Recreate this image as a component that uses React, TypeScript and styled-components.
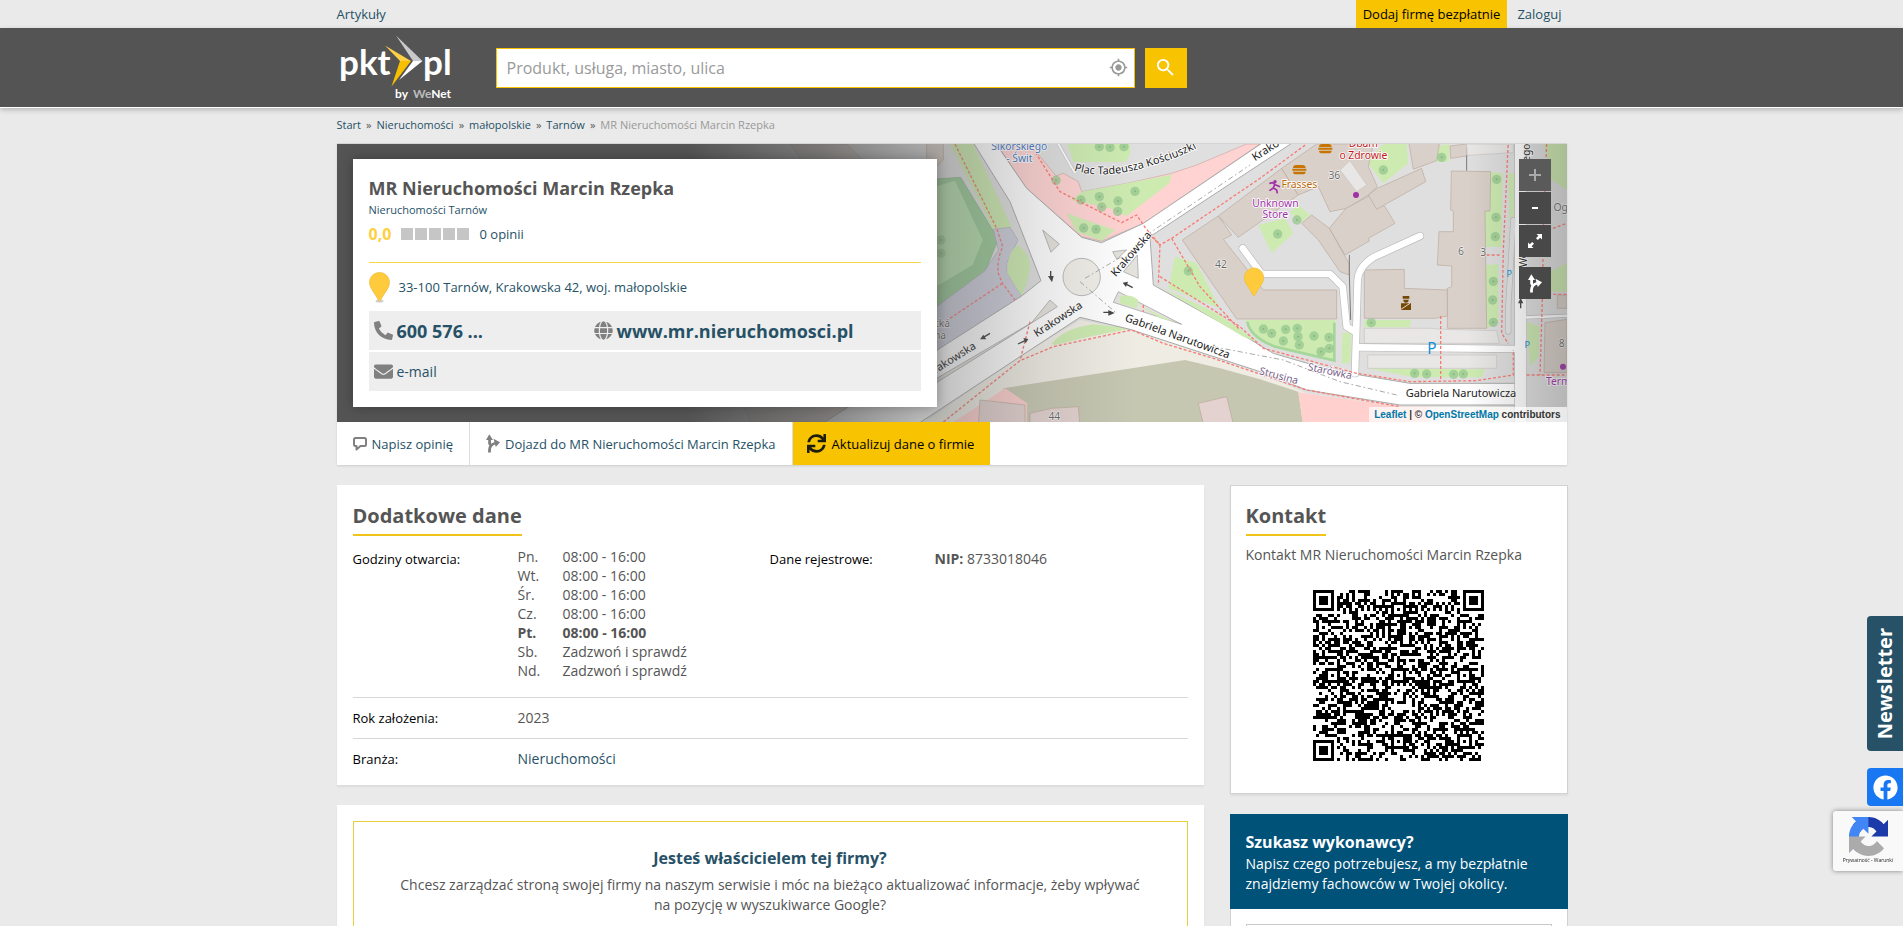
import React from 'react';
import styled, { createGlobalStyle, css } from 'styled-components';
import { FaPhoneAlt, FaGlobe, FaEnvelope, FaSync, FaFacebook } from 'react-icons/fa';
import { MdSearch, MdMyLocation } from 'react-icons/md';

const color = {
  page: '#eaeaea',
  dark: '#545454',
  text: '#555555',
  link: '#265166',
  yellow: '#f8c300',
  line: '#d8d8d8',
  blue: '#005279',
};

const GlobalStyle = createGlobalStyle`
  *, *::before, *::after { box-sizing: border-box; }
  body {
    margin: 0;
    background: ${color.page};
    color: ${color.text};
    font: 14px/20px "Open Sans", "Noto Sans", sans-serif;
  }
  h1, h2, h3, p { margin: 0; padding: 0; }
  a { color: ${color.link}; text-decoration: none; }
  button, input { font: inherit; }
`;

const Page = styled.div`
  height: 100vh;
  overflow: hidden;
`;

const Container = styled.div`
  width: 100%;
  max-width: 1232px;
  margin: 0 auto;
  padding-left: 1px;
`;

const HeroContainer = styled(Container)`
  padding-right: 1px;
`;

const TopBar = styled(Container)`
  display: flex;
  justify-content: space-between;
  height: 28px;
  font-size: 13px;
  line-height: 28px;
`;

const TopLinks = styled.nav`
  display: flex;
  gap: 10px;
  padding-right: 6px;
`;

const AddCompany = styled.a`
  padding: 0 7px;
  background: ${color.yellow};
  color: #000;
`;

const Header = styled.header`
  background: ${color.dark};
  border-bottom: 1px solid #fff;
  box-shadow: 0 2px 5px rgba(0, 0, 0, 0.22);
`;

const HeaderInner = styled(Container)`
  display: flex;
  align-items: center;
  height: 79px;
`;

const LogoLink = styled.a`
  flex: none;
  width: 159px;
  height: 79px;
`;

const SearchForm = styled.form`
  display: flex;
  gap: 10px;
  width: 691px;
`;

const SearchField = styled.label`
  display: flex;
  flex: 1;
  align-items: center;
  height: 40px;
  padding: 0 6px 0 10px;
  background: #fff;
  border: 1px solid ${color.yellow};
  color: #999;
`;

const SearchInput = styled.input`
  flex: 1;
  min-width: 0;
  border: 0;
  outline: 0;
  padding: 0;
  background: none;
  color: ${color.text};
  font-size: 16px;
  &::placeholder { color: #9a9a9a; opacity: 1; }
`;

const SearchButton = styled.button`
  display: grid;
  place-items: center;
  width: 42px;
  height: 40px;
  padding: 0;
  border: 0;
  background: ${color.yellow};
  color: #fff;
`;

const Breadcrumbs = styled(Container).attrs({ as: 'nav' })`
  display: flex;
  gap: 5px;
  padding-top: 8px;
  padding-bottom: 9px;
  font-size: 11px;
  line-height: 18px;
  color: ${color.text};
`;

const Crumb = styled.span<{ $current?: boolean }>`
  display: flex;
  gap: 5px;
  color: ${(p) => (p.$current ? '#999' : 'inherit')};
`;

const Hero = styled.section`
  border-top: 1px solid #d4d4d4;
  background: #fff;
  box-shadow: 0 1px 2px rgba(0, 0, 0, 0.12);
`;

const MapArea = styled.div`
  position: relative;
  display: flex;
  justify-content: space-between;
  align-items: flex-start;
  height: 278px;
  padding: 15px 16px;
  overflow: hidden;
  background: ${color.dark};
`;

const MapSvg = styled.svg`
  position: absolute;
  inset: 0;
  width: 100%;
  height: 100%;
`;

const InfoCard = styled.div`
  position: relative;
  width: 584px;
  height: 248px;
  padding: 16px;
  background: #fff;
  box-shadow: 0 0 12px rgba(0, 0, 0, 0.3);
`;

const CompanyName = styled.h1`
  font-size: 18px;
  line-height: 26px;
  color: ${color.text};
`;

const Category = styled.a`
  display: block;
  font-size: 11px;
  line-height: 18px;
`;

const Rating = styled.div`
  display: flex;
  align-items: center;
  height: 30px;
  margin-bottom: 13px;
  font-size: 13px;
`;

const Score = styled.b`
  width: 32px;
  font-size: 16px;
  color: #ffcf3f;
`;

const Squares = styled.div`
  display: flex;
  gap: 2px;
  margin-right: 11px;
`;

const Square = styled.span`
  width: 12px;
  height: 12px;
  background: #c6c6c6;
`;

const Address = styled.p`
  display: flex;
  align-items: center;
  gap: 9px;
  height: 49px;
  border-top: 1px solid #f5d54a;
  font-size: 13px;
  color: ${color.link};
`;

const ContactRow = styled.div`
  display: grid;
  grid-template-columns: 220px 1fr;
  align-items: center;
  height: 39px;
  margin-bottom: 2px;
  padding: 0 5px;
  background: #eee;
`;

const ContactLink = styled.a<{ $strong?: boolean }>`
  display: flex;
  align-items: center;
  gap: 4px;
  svg { color: #808080; flex: none; }
  ${(p) => p.$strong && css`
    font-size: 18px;
    font-weight: 700;
  `}
`;

const MapControls = styled.div`
  position: relative;
  display: flex;
  flex-direction: column;
  gap: 1px;
`;

const MapButton = styled.button<{ $apart?: boolean; $muted?: boolean }>`
  display: grid;
  place-items: center;
  width: 32px;
  height: 32px;
  margin-top: ${(p) => (p.$apart ? 9 : 0)}px;
  padding: 0;
  border: 0;
  background: ${(p) => (p.$muted ? '#5a5a5a' : '#484848')};
  color: ${(p) => (p.$muted ? '#aaa' : '#fff')};
`;

const Attribution = styled.div`
  position: absolute;
  right: 0;
  bottom: 0;
  padding: 0 6px 0 5px;
  background: rgba(255, 255, 255, 0.7);
  color: #333;
  font: bold 10px/15px "Liberation Sans", sans-serif;
  a { color: #0078a8; }
`;

const Tabs = styled.nav`
  display: flex;
  height: 43px;
  font-size: 13px;
`;

const Tab = styled.a<{ $active?: boolean }>`
  display: flex;
  align-items: center;
  gap: 5px;
  padding: 0 16px;
  border-right: 1px solid #ddd;
  svg { color: #808080; flex: none; }
  ${(p) => p.$active && css`
    gap: 6px;
    padding: 0 16px 0 14px;
    border: 0;
    background: ${color.yellow};
    color: #000;
    svg { color: #1c1c10; }
  `}
`;

const Columns = styled(Container)`
  display: grid;
  grid-template-columns: minmax(0, 1fr) 338px;
  gap: 26px;
  align-items: start;
  padding-top: 20px;
`;

const Column = styled.div`
  display: flex;
  flex-direction: column;
  gap: 20px;
`;

const Card = styled.section<{ $outlined?: boolean }>`
  padding: ${(p) => (p.$outlined ? '15px' : '16px 16px 6px')};
  background: #fff;
  border: ${(p) => (p.$outlined ? '1px solid #d2d2d2' : '0')};
  box-shadow: 0 2px 2px rgba(0, 0, 0, 0.06);
`;

const Heading = styled.h2`
  display: inline-block;
  padding-bottom: 4px;
  border-bottom: 2px solid #f0c419;
  font-size: 20px;
  line-height: 29px;
  color: ${color.text};
`;

const DataRow = styled.div<{ $first?: boolean }>`
  display: grid;
  grid-template-columns: 165px 252px 165px 1fr;
  padding: ${(p) => (p.$first ? '13px 0 17px' : '10px 0')};
  border-top: ${(p) => (p.$first ? '0' : `1px solid ${color.line}`)};
`;

const DataLabel = styled.div`
  font-size: 13px;
  color: #000;
`;

const Hours = styled.table`
  margin-top: -2px;
  border-collapse: collapse;
  line-height: 19px;
  td, th { padding: 0; text-align: left; font-weight: inherit; }
  th { width: 45px; }
`;

const HoursRow = styled.tr<{ $today?: boolean }>`
  font-weight: ${(p) => (p.$today ? 700 : 400)};
`;

const OwnerBox = styled.div`
  padding: 24px 40px 60px;
  border: 1px solid #e6cf3c;
  text-align: center;
`;

const OwnerTitle = styled.h3`
  margin-bottom: 5px;
  font-size: 16px;
  line-height: 24px;
  color: ${color.link};
`;

const ContactText = styled.p`
  margin: 9px 0 25px;
`;

const QrSvg = styled.svg`
  display: block;
  width: 171px;
  height: 171px;
  margin: 0 auto 17px;
`;

const Inquiry = styled.section`
  background: #fff;
  border: 1px solid #d2d2d2;
  border-top: 0;
`;

const InquiryHead = styled.div`
  margin: 0 -1px;
  padding: 17px 16px 15px;
  background: ${color.blue};
  color: #fff;
  h2 { font-size: 16px; line-height: 23px; }
`;

const InquiryInput = styled.input`
  display: block;
  width: calc(100% - 30px);
  height: 40px;
  margin: 15px;
  border: 1px solid #c8c8c8;
`;

const SideTab = styled.a<{ $top: number; $h: number; $bg: string }>`
  position: fixed;
  right: 0;
  top: ${(p) => p.$top}px;
  display: grid;
  place-items: center;
  width: 36px;
  height: ${(p) => p.$h}px;
  border-radius: 4px 0 0 4px;
  background: ${(p) => p.$bg};
  color: #fff;
`;

const VerticalText = styled.span`
  writing-mode: vertical-rl;
  transform: rotate(180deg);
  font-size: 20px;
  line-height: 28px;
  font-weight: 700;
`;

const Captcha = styled.div`
  position: fixed;
  right: 0;
  top: 811px;
  display: flex;
  flex-direction: column;
  align-items: center;
  width: 70px;
  height: 60px;
  padding-top: 6px;
  border-radius: 3px 0 0 3px;
  background: #f9f9f9;
  box-shadow: 0 0 5px #808080;
  color: #222;
  font: 5px/8px "Open Sans", sans-serif;
`;

const Logo = () => (
  <svg width="120" height="79" viewBox="0 28 120 79" role="img" aria-label="pkt.pl by WeNet">
    <g fill="#fff" fontFamily="Lato, sans-serif" fontWeight="700">
      <text x="2" y="75" fontSize="35">pkt</text>
      <text x="86" y="75" fontSize="35">pl</text>
      <text x="58" y="98" fontSize="12">by</text>
      <text x="76" y="98" fontSize="12"><tspan fill="#bdbdbd">We</tspan>Net</text>
    </g>
    <path fill="#c9c9cb" d="M59 35.500 85.500 61H76Z" />
    <path fill="#fff" d="M85.500 61 62 80 76 61Z" />
    <path fill="#ffd044" d="M48 45.500 74 61H63Z" />
    <path fill="#f8bf00" d="M74 61 54.500 86.500 63 61Z" />
  </svg>
);

const PinIcon = () => (
  <svg width="21" height="31" viewBox="0 0 21 31" aria-hidden="true">
    <ellipse cx="10.500" cy="29" rx="4" ry="1.600" fill="#cfcfcf" />
    <path d="M10.500 .6C4.800 .6.600 5 .600 10.400c0 6.100 6.200 11.900 8.600 17.400.6 1.400 2 1.400 2.600 0 2.400-5.500 8.600-11.300 8.600-17.400C20.400 5 16.200.6 10.500.6Z" fill="#ffcb3d" stroke="#eebb35" strokeWidth=".8" />
  </svg>
);

const RouteIcon = () => (
  <svg width="14" height="19" viewBox="0 0 14 19" fill="none" stroke="currentColor" strokeWidth="2.800" aria-hidden="true">
    <path d="M3.500 18.500V16c0-4.500 3-6.200 6.500-7" />
    <path d="M5.500 12 3.600 9.500V4" />
    <path d="M0 6 3.300.3 7 6ZM7.500 4.800 14 8.200 9.800 13Z" fill="currentColor" stroke="none" />
  </svg>
);

const ExpandIcon = () => (
  <svg width="16" height="16" viewBox="0 0 16 16" aria-hidden="true">
    <path d="M1 15V9.500l1.800 1.800L5.200 9l1.800 1.800-2.400 2.400L6.500 15ZM15 1v5.500l-1.800-1.800L10.800 7 9 5.200l2.400-2.400L9.500 1Z" fill="currentColor" />
  </svg>
);

const CommentIcon = () => (
  <svg width="14" height="15" viewBox="0 0 14 15" fill="none" stroke="currentColor" strokeWidth="2" strokeLinejoin="round" aria-hidden="true">
    <path d="M2.500 2h9q1.500 0 1.500 1.500v5q0 1.500-1.500 1.500H7.500L3.500 13.500V10H2.500Q1 10 1 8.500v-5Q1 2 2.500 2Z" />
  </svg>
);

const CaptchaLogo = () => (
  <svg width="39" height="39" viewBox="0 0 64 64" role="img" aria-label="reCAPTCHA">
    <path fill="#1c3aa9" d="M64 31.955l-.033-1.370V4.687l-7.160 7.160C50.948 4.674 42.033.093 32.050.093c-10.400 0-19.622 4.960-25.458 12.640l11.736 11.860a15.550 15.550 0 0 1 4.754-5.334c2.050-1.600 4.952-2.906 8.968-2.906.485 0 .86.057 1.135.163 4.976.393 9.288 3.140 11.828 7.124l-8.307 8.307L64 31.953" />
    <path fill="#4285f4" d="M31.862.094l-1.370.033H4.594l7.160 7.160C4.580 13.147 0 22.060 0 32.046c0 10.400 4.960 19.622 12.640 25.458L24.500 45.768a15.550 15.550 0 0 1-5.334-4.754c-1.600-2.050-2.906-4.952-2.906-8.968 0-.485.057-.86.163-1.135.393-4.976 3.140-9.288 7.124-11.828l8.307 8.307L31.860.095" />
    <path fill="#ababab" d="M.001 32.045l.033 1.370v25.898l7.160-7.160c5.860 7.173 14.774 11.754 24.760 11.754 10.400 0 19.622-4.960 25.458-12.640l-11.736-11.860a15.550 15.550 0 0 1-4.754 5.334c-2.050 1.600-4.952 2.906-8.968 2.906-.485 0-.86-.057-1.135-.163-4.976-.393-9.288-3.140-11.828-7.124l8.307-8.307c-10.522.04-22.400.066-27.295-.005" />
  </svg>
);

const QR_SIZE = 57;

function ring(x: number, y: number, cx: number, cy: number) {
  return Math.max(Math.abs(x - cx), Math.abs(y - cy));
}

function buildQrPath() {
  const finders = [[3, 3], [QR_SIZE - 4, 3], [3, QR_SIZE - 4]];
  const aligners: number[][] = [];
  for (const cx of [6, 28, 50]) {
    for (const cy of [6, 28, 50]) {
      if (!finders.some(([fx, fy]) => ring(cx, cy, fx, fy) < 6)) aligners.push([cx, cy]);
    }
  }
  let seed = 90210;
  let d = '';
  for (let y = 0; y < QR_SIZE; y++) {
    for (let x = 0; x < QR_SIZE; x++) {
      seed = (Math.imul(seed, 1664525) + 1013904223) >>> 0;
      let on = (seed >>> 16) % 100 < 51;
      if (x === 6) on = y % 2 === 0;
      if (y === 6) on = x % 2 === 0;
      for (const [cx, cy] of aligners) {
        const r = ring(x, y, cx, cy);
        if (r <= 2) on = r !== 1;
      }
      for (const [cx, cy] of finders) {
        const r = ring(x, y, cx, cy);
        if (r <= 4) on = r !== 2 && r !== 4;
      }
      if (on) d += `M${x} ${y}h1v1h-1z`;
    }
  }
  return d;
}

const qrPath = buildQrPath();

const pathTrees = [
  [378, 121], [508, 170], [453, 180], [515, 201], [564, 183], [563, 214], [615, 154], [461, 264], [498, 268],
  [508, 20], [540, 22], [582, 20], [775, 393], [33, 300], [33, 340],
  [1360, 90], [1101, 240], [1043, 282], [1700, 118], [1698, 232], [1696, 290], [1690, 424], [1688, 480], [1690, 547],
  [1000, 567], [1025, 580], [1067, 568], [1102, 565], [1060, 603], [1104, 590], [1108, 615], [1152, 588],
  [1197, 592], [1173, 635], [1198, 625], [1324, 548], [1454, 700], [1490, 702], [1571, 703], [1600, 702], [1535, 52],
];

const label = { fontSize: 33, fill: '#222', stroke: '#fff', strokeWidth: 5, paintOrder: 'stroke' as const };
const small = { ...label, fontSize: 31 };

const CityMap = () => (
  <MapSvg viewBox="0 0 1230 278" preserveAspectRatio="xMaxYMin slice" role="img" aria-label="Mapa dojazdu">
    <defs>
      <linearGradient id="fade" gradientUnits="userSpaceOnUse" x1="350" y1="0" x2="800" y2="0">
        <stop offset="0" stopColor="#545454" />
        <stop offset=".3" stopColor="#585858" stopOpacity=".74" />
        <stop offset=".54" stopColor="#606060" stopOpacity=".42" />
        <stop offset=".78" stopColor="#686868" stopOpacity=".16" />
        <stop offset="1" stopColor="#707070" stopOpacity="0" />
      </linearGradient>
      <linearGradient id="edge" x1="0" y1="0" x2="1" y2="0">
        <stop offset="0" stopColor="#545454" stopOpacity="0" />
        <stop offset="1" stopColor="#545454" stopOpacity=".3" />
      </linearGradient>
      <path id="plac" d="M432 92Q520 118 640 84T830 8" />
    </defs>
    <g transform="translate(593 -4) scale(.33333)" fontFamily="Noto Sans, Open Sans, sans-serif">
      <rect x="-1800" y="0" width="3720" height="860" fill="#e0dfdf" />

      {/* sports ground and green belt west of the roundabout */}
      <g strokeWidth="2">
        <path d="M-420 12h170l110 110-60 60-120-30ZM-600 700l200-60 180 110-60 96h-260Z" fill="#d9d0c9" stroke="#b9a99c" />
        <path d="M60 12H130L245 262 190 268Z" fill="#cdebb0" />
        <path d="M-330 200 0 118 92 112 205 298 165 395 20 500-220 560Z" fill="#9bcb98" stroke="#86b685" />
        <path d="M-300 220 0 145 75 122 158 300 128 375 0 450-220 520Z" fill="#b6e0ad" />
        <path d="M190 268 240 262 264 300 230 370 232 400 275 468-150 745-190 600 20 500 165 392 205 330Z" fill="#cccdda" stroke="#acadba" />
        <path d="M262 315Q300 340 300 375T275 468L232 400Q230 340 262 315Z" fill="#cdebb0" />
      </g>

      {/* square and lawns north */}
      <path d="M200 12H300L378 108 400 100 445 125 455 155 590 130 725 100 800 75 950 12H990L640 250 515 303 455 290 290 145Z" fill="#ffd3d2" stroke="#c9a9a5" strokeWidth="2" />
      <path d="M455 155 725 104 718 130 590 228 540 205 425 180ZM410 220 555 270 515 302 440 275ZM412 12H600Q605 60 580 66H430Z" fill="#cdebb0" />
      <path d="M385 12 435 100" stroke="#bbb" strokeWidth="9" />
      <path d="M385 12 435 100" stroke="#fff" strokeWidth="6" />

      {/* land south */}
      <path d="M-500 860 0 835 270 650 450 540 610 572 990 700 1130 760 1410 800H1740V860Z" fill="#eeece3" />
      <path d="M220 745 765 660 870 685 990 718 1105 755 1120 860H240Z" fill="#c6c7b1" />
      <path d="M1105 757 1410 800H1500V860H1120ZM225 745 292 790 290 860H50Z" fill="#ffd0cd" />
      <path d="M150 780 285 795V860H145ZM300 820 365 805 445 800 450 860H300ZM805 790 890 770 912 860H822Z" fill="#e3d2cf" stroke="#b9a99c" strokeWidth="2" />
      <path d="M365 612Q400 565 490 553L605 565 470 592 375 615Z" fill="#cdebb0" />

      {/* streets of the roundabout */}
      <path d="M125 0 240 185 333 422 275 468-400 900-200 960 0 828 270 650 450 532 600 568 990 695 1130 750 1410 795H1760V730H1440L1200 690 1030 640 930 580 670 435 660 290 930 112 1100 0H1010L640 250 515 308 455 292 290 145 190 0Z" fill="#fff" stroke="#aaa" strokeWidth="3" />
      <path d="M338 270 388 312 363 337ZM550 487 565 455 755 553ZM20 715 305 548 360 480 382 500 240 590 0 740ZM622 345 580 395 625 415ZM548 335 590 330 560 358Z" fill="#e4e2dc" stroke="#999" strokeWidth="2" />
      <path d="M570 470Q600 460 625 480L620 505 570 490ZM635 500 730 545 690 535Z" fill="#cdebb0" />
      <circle cx="455" cy="411" r="56" fill="#f1efe9" stroke="#999" strokeWidth="2" />

      {/* lawns east */}
      <g fill="#cdebb0">
        <path d="M735 350 800 370 870 505 715 445ZM690 440 860 520 990 608 940 590ZM945 540H1215V665L1040 620 980 590ZM1303 540H1443L1440 562H1303ZM1313 685 1665 688 1655 712H1450Z" />
        <path d="M1682 95 1718 100 1715 320H1668L1665 215ZM1665 375 1705 372V545L1672 565ZM1790 545 1830 560 1825 650 1800 680ZM1237 580 1265 575 1260 670H1235Z" />
        <path d="M985 255 1065 235 1090 280 1025 340ZM1310 65 1360 12H1430L1435 70 1360 130ZM1840 0H1911V150L1865 120ZM1850 400 1911 370V455H1835ZM1080 215 1105 195 1140 225 1110 250ZM1515 20 1560 12 1555 65H1520ZM1735 100H1755L1750 235H1738Z" />
      </g>
      <path d="M952 545Q960 590 1035 620L1213 662V548" fill="none" stroke="#a5d69a" strokeWidth="8" />

      {/* buildings */}
      <g fill="#d9d0c9" stroke="#b9a99c" strokeWidth="2">
        <path d="M757 300 865 228 905 285 880 298 1000 450H1220V537H920Z" />
        <path d="M865 228 1055 85 1105 165 925 292Z" />
        <path d="M1055 85 1160 12H1330L1315 80 1342 140 1315 165 1250 205 1200 215 1165 140 1105 165Z" />
        <path d="M1248 205 1317 168 1365 200 1395 250 1315 295 1318 303 1245 345 1198 265Z" />
        <path d="M1115 250 1145 225 1198 265 1258 372V405L1230 395 1165 300Z" />
        <path d="M1315 165 1342 145 1475 85 1487 125 1340 208Z" />
        <path d="M1435 0H1530L1520 62 1450 88ZM1560 18 1610 12V48L1562 55Z" />
        <path d="M1564 93 1682 95 1680 213H1665L1670 565H1552V445L1565 440V378L1522 375 1527 275H1570V213L1562 210Z" />
        <path d="M1303 390 1423 388V445L1552 450V528L1515 535H1303Z" />
        <path d="M1845 548 1911 538V698H1842ZM1882 465H1911V505H1882Z" />
        <path d="M-10 0h50v60L-10 110Z" />
      </g>
      <g fill="#e8e7e6" stroke="#c9c5c2" strokeWidth="2">
        <path d="M1230 90 1260 62 1310 135 1280 155ZM1303 565H1498L1540 568 1700 572 1708 610H1303ZM1313 645H1700V685H1313ZM1610 12H1750V38L1612 46Z" />
      </g>
      <path d="M1610 46V92M1258 345V405L1262 540" fill="none" stroke="#777" strokeWidth="3" />

      {/* service roads */}
      {[{ c: '#bbb', e: 4 }, { c: '#fff', e: 0 }].map(({ c, e }) => (
        <g key={c} fill="none" stroke={c} strokeLinecap="round" strokeLinejoin="round">
          <path d="M938 325 995 402H1200L1238 440 1250 560 1275 575" strokeWidth={20 + e} />
          <path d="M1275 700 1283 420Q1286 380 1330 352L1470 288" strokeWidth={20 + e} />
          <path d="M1285 622 1765 627" strokeWidth={20 + e} />
          <path d="M1772 850V0" strokeWidth={34 + e} />
          <path d="M1792 532 1920 527" strokeWidth={8 + e} />
          <path d="M1735 575V500L1750 240" strokeWidth={14 + e} stroke={e ? '#bbb' : '#e6e5e5'} />
        </g>
      ))}

      <g fill="#96c78f" opacity=".75">
        {pathTrees.map(([x, y]) => <circle key={`${x}-${y}`} cx={x} cy={y} r="14" />)}
      </g>
      <g fill="#6f9d6b" opacity=".5">
        {pathTrees.map(([x, y]) => <circle key={`${x}-${y}`} cx={x} cy={y} r="3" />)}
      </g>

      {/* footpaths */}
      <g fill="none" stroke="#f77b74" strokeWidth="4" strokeDasharray="9 6">
        <path d="M75 12 200 265 218 320Q200 360 205 400L217 430 255 480M217 430 0 575" />
        <path d="M300 12 390 155 575 248 620 225 645 262 690 315 685 435M665 290 690 315 725 295 990 115 1130 12M725 295 810 440 930 570" />
        <path d="M40 846 270 662 370 620 605 570 700 610 850 655 990 702 1130 750 1410 800M300 545 270 662M640 495V515" />
        <path d="M690 410 930 560 1000 625 1280 700 1440 725 1640 722 1750 705V630M1532 528V722M1735 0 1720 330 1715 580 1735 610M1670 345H1715" />
        <path d="M1850 12 1840 260 1838 450 1830 705M1855 270 1911 250M1840 463H1911M1790 705H1911" />
      </g>
      <g fill="none" stroke="#aaa" strokeWidth="3" strokeDasharray="16 8 5 8">
        <path d="M650 285 960 75M450 425 560 520M465 415 575 350M850 620 1060 660 1230 725 1400 765" />
      </g>

      {/* one-way arrows */}
      <g stroke="#444" strokeWidth="4" fill="#444">
        <path d="M362 393V418M180 580 160 592M264 612 285 602M520 517H540M608 443 590 433M1772 505V485" />
        <path d="M354 408H371L366 427ZM150 598 160 584 169 598ZM295 597 280 594 287 610ZM554 519 535 510V527ZM578 428 594 425 588 441ZM1764 490H1780L1772 474Z" stroke="none" />
      </g>

      {/* labels */}
      <g {...label}>
        <text transform="translate(320 592) rotate(-33)">Krakowska</text>
        <text transform="translate(557 412) rotate(-49)">Krakowska</text>
        <text transform="translate(-1 712) rotate(-32)">Krakowska</text>
        <text transform="translate(583 542) rotate(20)">Gabriela Narutowicza</text>
        <text transform="translate(975 64) rotate(-33)">Krakowska</text>
        <text x="1427" y="771">Gabriela Narutowicza</text>
        <text><textPath href="#plac">Plac Tadeusza Kościuszki</textPath></text>
        <text transform="translate(1800 72) rotate(-90)" fontSize="30">iego</text>
        <text transform="translate(1790 382) rotate(-90)" fontSize="30">Wo</text>
      </g>
      <g {...small} fill="#4474c0" textAnchor="middle">
        <text x="268" y="30">Sikorskiego</text>
        <text x="268" y="66">- Świt</text>
      </g>
      <g {...small} fill="#c01818" textAnchor="middle">
        <text x="1300" y="22">Dbam</text>
        <text x="1300" y="56">o Zdrowie</text>
      </g>
      <g {...small} fill="#a030a8" textAnchor="middle">
        <text x="1036" y="200">Unknown</text>
        <text x="1036" y="235">Store</text>
        <text x="1885" y="735">Term</text>
      </g>
      <text {...small} x="1108" y="143" fill="#b8690a" textAnchor="middle">Frasses</text>
      <g {...small} fill="#7a6188">
        <text transform="translate(1132 690) rotate(12)">Starówka</text>
        <text transform="translate(986 702) rotate(15)">Strusina</text>
      </g>
      <g {...small} fill="#666" strokeWidth="3" textAnchor="middle">
        <text x="873" y="384">42</text>
        <text x="1213" y="116">36</text>
        <text x="1593" y="346">6</text>
        <text x="1660" y="348">3</text>
        <text x="1895" y="622">8</text>
        <text x="373" y="840">44</text>
        <text x="36" y="560">cká</text>
        <text x="30" y="596">na</text>
        <text x="1892" y="213">Og</text>
      </g>
      <g fill="#0f8fd8" textAnchor="middle">
        <text x="1506" y="643" fontSize="46">P</text>
        <text x="1738" y="412" fontSize="27">P</text>
        <text x="1792" y="625" fontSize="27">P</text>
      </g>

      {/* points of interest */}
      <g fill="#c77400">
        {[[1167, 12], [1089, 75]].map(([x, y]) => (
          <path key={x} transform={`translate(${x} ${y})`} d="M0 9Q0 0 10 0H28Q38 0 38 9ZM-2 11H40V17H-2ZM0 20H38Q38 28 28 28H10Q0 28 0 20Z" />
        ))}
      </g>
      <g fill="#a030a8">
        <circle cx="1278" cy="165" r="9" />
        <circle cx="1899" cy="680" r="9" />
        <circle cx="1035" cy="125" r="5" />
      </g>
      <path d="M1018 130 1028 128 1036 134 1050 140M1034 134 1030 144 1040 150 1042 160M1030 144 1018 152" fill="none" stroke="#a030a8" strokeWidth="5" />
      <path d="M1418 468H1438V476H1418ZM1420 479H1436Q1436 488 1428 488T1420 479ZM1413 490H1443V510H1413Z" fill="#734a08" />
      <path d="M1413 508 1440 490" stroke="#e9ddc9" strokeWidth="3" />
      <path d="M972 384c-16 0-29 13-29 29 0 18 16 30 24 49q5 10 10 0c8-19 24-31 24-49 0-16-13-29-29-29Z" fill="#ffcb3d" stroke="#eebb35" strokeWidth="2" />
    </g>
    <rect width="1230" height="278" fill="url(#fade)" />
    <rect x="1130" width="100" height="278" fill="url(#edge)" />
  </MapSvg>
);

const crumbs = ['Start', 'Nieruchomości', 'małopolskie', 'Tarnów'];

const hours = [
  ['Pn.', '08:00 - 16:00'],
  ['Wt.', '08:00 - 16:00'],
  ['Śr.', '08:00 - 16:00'],
  ['Cz.', '08:00 - 16:00'],
  ['Pt.', '08:00 - 16:00'],
  ['Sb.', 'Zadzwoń i sprawdź'],
  ['Nd.', 'Zadzwoń i sprawdź'],
];

export default function App() {
  return (
    <Page>
      <GlobalStyle />
      <TopBar>
        <a href="#artykuly">Artykuły</a>
        <TopLinks>
          <AddCompany href="#dodaj">Dodaj firmę bezpłatnie</AddCompany>
          <a href="#zaloguj">Zaloguj</a>
        </TopLinks>
      </TopBar>

      <Header>
        <HeaderInner>
          <LogoLink href="#start"><Logo /></LogoLink>
          <SearchForm onSubmit={(e) => e.preventDefault()}>
            <SearchField>
              <SearchInput type="text" placeholder="Produkt, usługa, miasto, ulica" aria-label="Szukaj" />
              <MdMyLocation size={19} />
            </SearchField>
            <SearchButton type="submit" aria-label="Szukaj"><MdSearch size={23} /></SearchButton>
          </SearchForm>
        </HeaderInner>
      </Header>

      <Breadcrumbs>
        {crumbs.map((c) => (
          <Crumb key={c}><a href="#katalog">{c}</a><span>»</span></Crumb>
        ))}
        <Crumb $current>MR Nieruchomości Marcin Rzepka</Crumb>
      </Breadcrumbs>

      <HeroContainer>
        <Hero>
          <MapArea>
            <CityMap />
            <InfoCard>
              <CompanyName>MR Nieruchomości Marcin Rzepka</CompanyName>
              <Category href="#kategoria">Nieruchomości Tarnów</Category>
              <Rating>
                <Score>0,0</Score>
                <Squares>{[1, 2, 3, 4, 5].map((n) => <Square key={n} />)}</Squares>
                <a href="#opinie">0 opinii</a>
              </Rating>
              <Address><PinIcon />33-100 Tarnów, Krakowska 42, woj. małopolskie</Address>
              <ContactRow>
                <ContactLink $strong href="#telefon"><FaPhoneAlt size={19} />600 576 ...</ContactLink>
                <ContactLink $strong href="#www"><FaGlobe size={19} />www.mr.nieruchomosci.pl</ContactLink>
              </ContactRow>
              <ContactRow>
                <ContactLink href="#email"><FaEnvelope size={19} />e-mail</ContactLink>
              </ContactRow>
            </InfoCard>
            <MapControls>
              <MapButton $muted aria-label="Przybliż">
                <svg width="12" height="12" stroke="currentColor" strokeWidth="2"><path d="M6 0V12M0 6H12" /></svg>
              </MapButton>
              <MapButton aria-label="Oddal">
                <svg width="6" height="2"><path d="M0 0H6V2H0Z" fill="currentColor" /></svg>
              </MapButton>
              <MapButton aria-label="Pełny ekran"><ExpandIcon /></MapButton>
              <MapButton $apart aria-label="Wyznacz trasę"><RouteIcon /></MapButton>
            </MapControls>
            <Attribution>
              <a href="#leaflet">Leaflet</a> | © <a href="#osm">OpenStreetMap</a> contributors
            </Attribution>
          </MapArea>
          <Tabs>
            <Tab href="#opinia"><CommentIcon />Napisz opinię</Tab>
            <Tab href="#dojazd"><RouteIcon />Dojazd do MR Nieruchomości Marcin Rzepka</Tab>
            <Tab $active href="#aktualizuj"><FaSync size={19} />Aktualizuj dane o firmie</Tab>
          </Tabs>
        </Hero>
      </HeroContainer>

      <Columns>
        <Column>
          <Card>
            <Heading>Dodatkowe dane</Heading>
            <DataRow $first>
              <DataLabel>Godziny otwarcia:</DataLabel>
              <Hours>
                <tbody>
                  {hours.map(([day, time]) => (
                    <HoursRow key={day} $today={day === 'Pt.'}>
                      <th scope="row">{day}</th>
                      <td>{time}</td>
                    </HoursRow>
                  ))}
                </tbody>
              </Hours>
              <DataLabel>Dane rejestrowe:</DataLabel>
              <div><b>NIP:</b> 8733018046</div>
            </DataRow>
            <DataRow>
              <DataLabel>Rok założenia:</DataLabel>
              <div>2023</div>
            </DataRow>
            <DataRow>
              <DataLabel>Branża:</DataLabel>
              <a href="#branza">Nieruchomości</a>
            </DataRow>
          </Card>
          <Card>
            <OwnerBox>
              <OwnerTitle>Jesteś właścicielem tej firmy?</OwnerTitle>
              <p>
                Chcesz zarządzać stroną swojej firmy na naszym serwisie i móc na bieżąco aktualizować
                informacje, żeby wpływać na pozycję w wyszukiwarce Google?
              </p>
            </OwnerBox>
          </Card>
        </Column>
        <Column>
          <Card $outlined>
            <Heading>Kontakt</Heading>
            <ContactText>Kontakt MR Nieruchomości Marcin Rzepka</ContactText>
            <QrSvg viewBox="0 0 57 57" shapeRendering="crispEdges" role="img" aria-label="Kod QR">
              <path d={qrPath} fill="#000" />
            </QrSvg>
          </Card>
          <Inquiry>
            <InquiryHead>
              <h2>Szukasz wykonawcy?</h2>
              <p>Napisz czego potrzebujesz, a my bezpłatnie znajdziemy fachowców w Twojej okolicy.</p>
            </InquiryHead>
            <InquiryInput type="text" aria-label="Czego potrzebujesz" />
          </Inquiry>
        </Column>
      </Columns>

      <SideTab href="#newsletter" $top={616} $h={135} $bg="#265166">
        <VerticalText>Newsletter</VerticalText>
      </SideTab>
      <SideTab href="#facebook" $top={768} $h={38} $bg="#1877f2" aria-label="Facebook">
        <FaFacebook size={25} />
      </SideTab>
      <Captcha>
        <CaptchaLogo />
        <span>Prywatność - Warunki</span>
      </Captcha>
    </Page>
  );
}
